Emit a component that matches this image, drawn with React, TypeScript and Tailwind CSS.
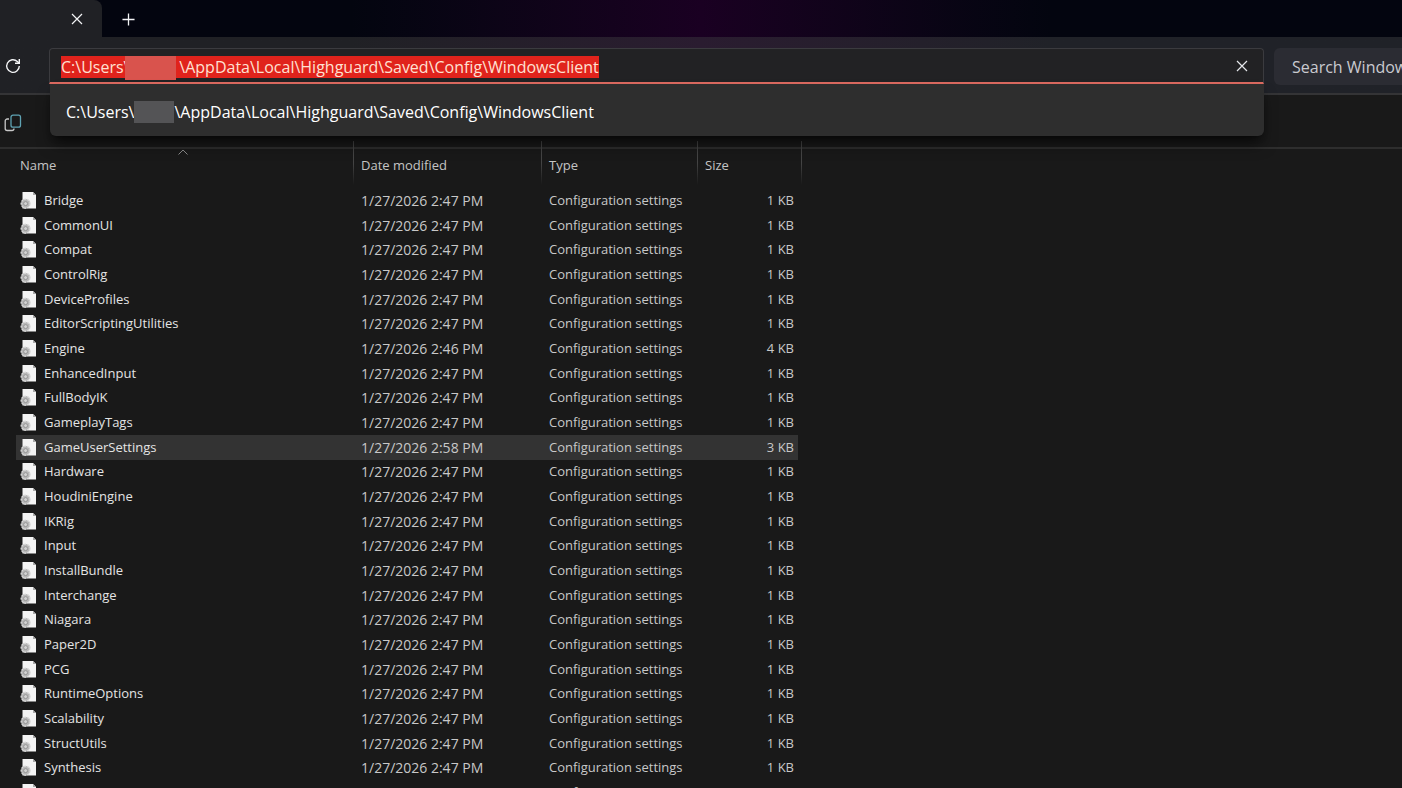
import { useState } from "react"

type FileEntry = {
  name: string
  modified: string
  size: string
}

const names = [
  "Bridge",
  "CommonUI",
  "Compat",
  "ControlRig",
  "DeviceProfiles",
  "EditorScriptingUtilities",
  "Engine",
  "EnhancedInput",
  "FullBodyIK",
  "GameplayTags",
  "GameUserSettings",
  "Hardware",
  "HoudiniEngine",
  "IKRig",
  "Input",
  "InstallBundle",
  "Interchange",
  "Niagara",
  "Paper2D",
  "PCG",
  "RuntimeOptions",
  "Scalability",
  "StructUtils",
  "Synthesis",
  "TextFX",
]

const overrides: Record<string, Partial<FileEntry>> = {
  Engine: { modified: "1/27/2026 2:46 PM", size: "4 KB" },
  GameUserSettings: { modified: "1/27/2026 2:58 PM", size: "3 KB" },
}

const files: FileEntry[] = names.map((name) => ({
  name,
  modified: "1/27/2026 2:47 PM",
  size: "1 KB",
  ...overrides[name],
}))

function CloseIcon() {
  return (
    <svg viewBox="0 0 12 12" className="size-3" fill="none" stroke="currentColor" strokeWidth="1.2">
      <path d="M1 1l10 10M11 1L1 11" />
    </svg>
  )
}

function IniFileIcon() {
  return (
    <svg viewBox="0 0 16 18" className="h-[18px] w-4 shrink-0">
      <path d="M2.500 0h10.500l3 3V16.500H2.500z" fill="#f4f4f4" />
      <path d="M13 0v3h3z" fill="#a8a8a8" />
      <circle cx="5.600" cy="11.600" r="4.600" fill="#b8b8b8" />
      <circle cx="5.600" cy="11.600" r="4.500" fill="none" stroke="#dcdcdc" strokeWidth="1.200" strokeDasharray="1.900 1.300" />
      <circle cx="5.600" cy="11.600" r="2" fill="#d2d2d2" stroke="#8c8c8c" strokeWidth="0.800" />
    </svg>
  )
}

function TabStrip() {
  return (
    <div className="flex h-[37px] bg-linear-to-r from-[#03050f] from-25% via-[#1a0022] to-[#03050f] to-75%">
      <div className="flex w-[102px] items-center justify-end rounded-tr-lg bg-[#202125] pr-[19px] text-gray-100">
        <button aria-label="Close tab">
          <CloseIcon />
        </button>
      </div>
      <button aria-label="New tab" className="ml-5 pt-0.5 text-gray-100">
        <svg viewBox="0 0 14 14" className="size-[13px]" fill="none" stroke="currentColor" strokeWidth="1.4">
          <path d="M7 0.500v13M0.500 7h13" />
        </svg>
      </button>
    </div>
  )
}

function AddressBar() {
  const [path, setPath] = useState("C:\\Users\\            \\AppData\\Local\\Highguard\\Saved\\Config\\WindowsClient")

  return (
    <div className="relative min-w-0 flex-1">
      <div className="flex h-9 items-center rounded-t border border-b-2 border-[#3b3b3f] border-b-[#dc6a60] bg-[#222224] px-[11px]">
        <div className="relative pt-[3px]">
          <input
            aria-label="Address"
            value={path}
            onChange={(e) => setPath(e.target.value)}
            className="block field-sizing-content h-[22px] bg-[#e0231c] text-base text-[#ffe0d2] outline-none"
          />
          <span className="absolute top-[3px] left-16 h-6 w-[51px] bg-[#d9534d]" />
        </div>
        <button aria-label="Clear address" className="mr-1 ml-auto text-gray-200">
          <CloseIcon />
        </button>
      </div>

      {/* Suggestions */}
      <div className="absolute inset-x-0 top-full z-10 ml-px flex h-[52px] items-center rounded-b-md bg-[#2e2e2e] px-4 pt-1 text-base text-white shadow-lg shadow-black/60">
        <button className="flex items-center whitespace-pre">
          C:\Users\<span className="h-[22px] w-10 bg-[#545456]" />
          \AppData\Local\Highguard\Saved\Config\WindowsClient
        </button>
      </div>
    </div>
  )
}

function NavigationBar() {
  return (
    <div className="flex h-[58px] items-start border-b-2 border-[#343436] bg-linear-to-r from-[#202125] from-25% via-[#2a1c30] to-[#202228] to-75% pt-[11px]">
      <button aria-label="Refresh" className="flex h-9 w-[49px] items-center pl-[5px] text-gray-100">
        <svg viewBox="0 0 16 16" className="size-4" fill="none" stroke="currentColor" strokeWidth="1.4">
          <path d="M14.300 8a6.300 6.300 0 1 1-2-4.600L14 5" />
          <path d="M14.300 1v4.300H10" />
        </svg>
      </button>
      <AddressBar />
      <input
        aria-label="Search"
        placeholder="Search WindowsClient"
        className="ml-2.5 h-[37px] w-32 rounded-l-md bg-[#2b2c33] pl-[18px] text-base text-gray-200 outline-none placeholder:text-[#c9cad0]"
      />
    </div>
  )
}

function CommandBar() {
  return (
    <div className="flex h-[54px] items-center border-b-2 border-[#2e2e2e] pt-1 pl-1">
      <button aria-label="Copy">
        <svg viewBox="0 0 18 18" className="size-[18px]" fill="none" strokeWidth="1.300">
          <path d="M5 5H3.200A2 2 0 0 0 1.200 7v7.500a2 2 0 0 0 2 2H8a2 2 0 0 0 2-2" stroke="#c8c8c8" />
          <rect x="7" y="1.200" width="9.500" height="12" rx="2" stroke="#5fa3b3" />
        </svg>
      </button>
    </div>
  )
}

const headings = ["Name", "Date modified", "Type", "Size"]

function FileTable() {
  return (
    <table className="ml-4 w-[782px] table-fixed text-left text-[13px]">
      <colgroup>
        <col className="w-[338px]" />
        <col className="w-[188px]" />
        <col className="w-[156px]" />
        <col className="w-[100px]" />
      </colgroup>
      <thead>
        <tr className="h-[39px] align-top text-[#c4c4c4]">
          {headings.map((heading) => (
            <th key={heading} className="group relative pt-[7px] pl-[7px] font-normal first:pl-1">
              {heading}
              <span className="absolute -top-2 right-0 h-11 w-px bg-linear-to-b from-[#444] via-[#444] to-transparent group-last:-right-1" />
              {heading === "Name" && (
                <svg viewBox="0 0 10 6" className="absolute top-0 left-[162px] h-1.5 w-2.5" fill="none" stroke="#8a8a8a">
                  <path d="M0.500 5.500L5 1l4.500 4.500" />
                </svg>
              )}
            </th>
          ))}
        </tr>
      </thead>
      <tbody>
        {files.map((file) => (
          <tr
            key={file.name}
            className={`h-[25px] text-[#c8c8c8] nth-[3n]:h-6 ${file.name === "GameUserSettings" ? "bg-[#333]" : ""}`}
          >
            <td className="p-0 pl-1">
              <div className="flex items-center gap-2 text-[#e4e4e4]">
                <IniFileIcon />
                {file.name}
              </div>
            </td>
            <td className="p-0 pl-[7px] text-sm">{file.modified}</td>
            <td className="p-0 pl-[7px]">Configuration settings</td>
            <td className="p-0 pr-1 text-right">{file.size}</td>
          </tr>
        ))}
      </tbody>
    </table>
  )
}

export default function App() {
  return (
    <div className="h-screen overflow-hidden bg-[#191919] font-['Open_Sans','Noto_Sans',sans-serif]">
      <TabStrip />
      <NavigationBar />
      <CommandBar />
      <FileTable />
    </div>
  )
}
